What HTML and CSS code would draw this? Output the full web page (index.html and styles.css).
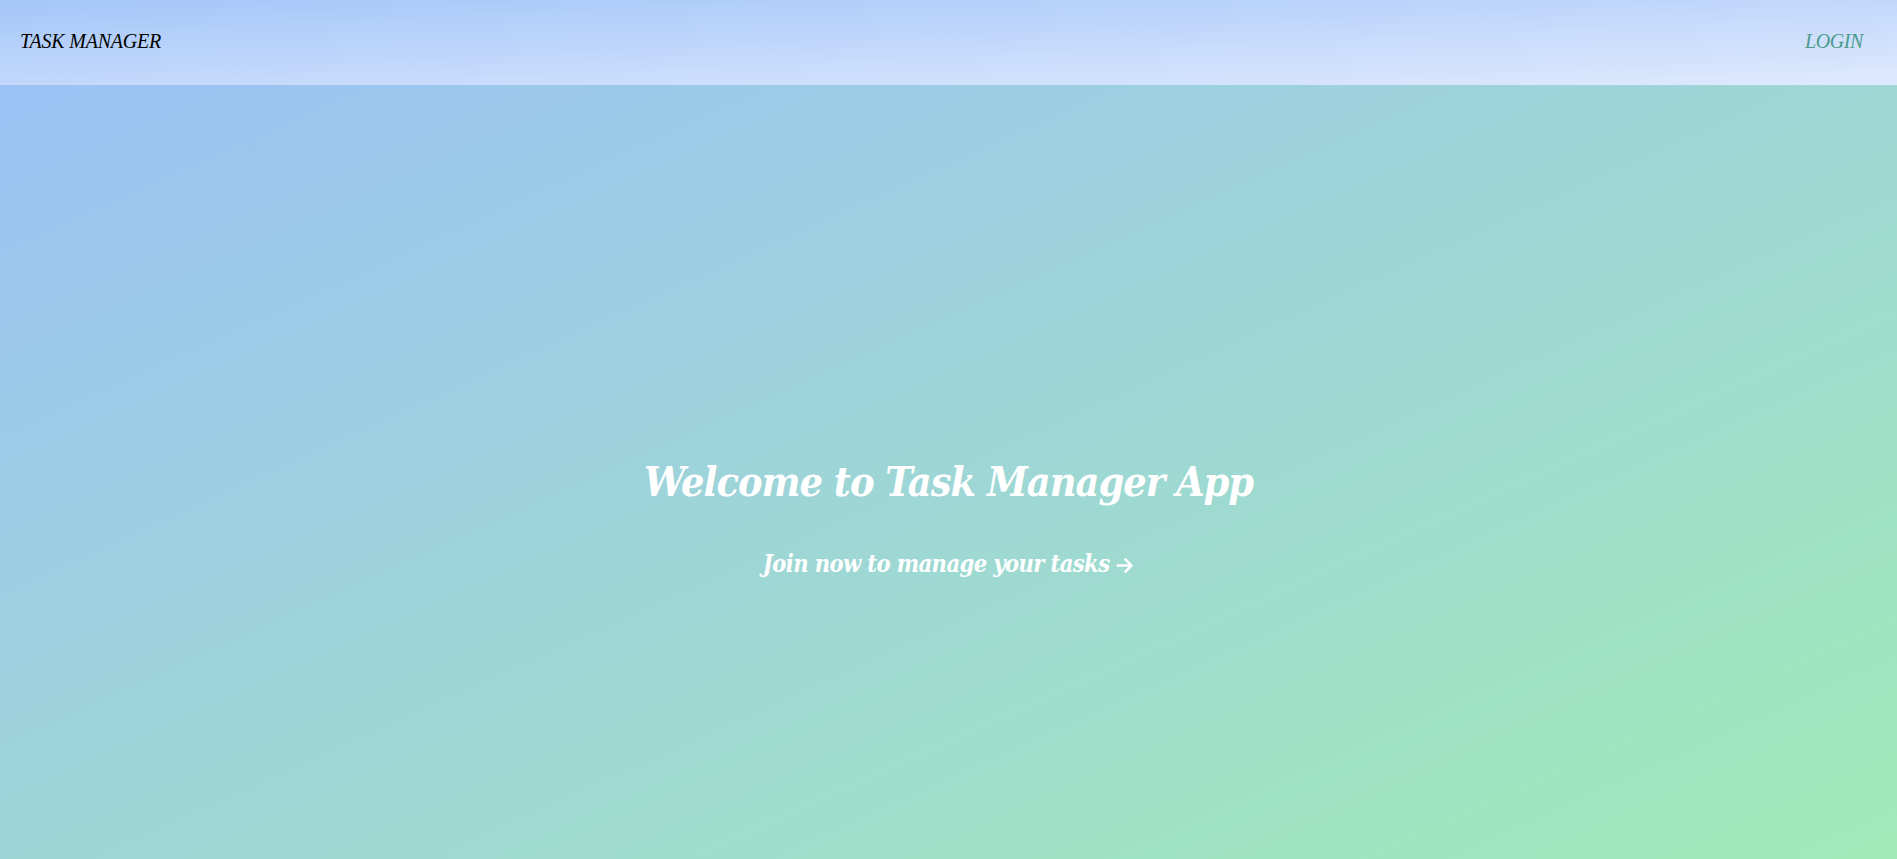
FILE: index.html
```html
<!DOCTYPE html>
<html lang="en">
<head>
<meta charset="utf-8">
<title>Task Manager</title>
<link rel="stylesheet" href="styles.css">
</head>
<body>
  <header class="topbar">
    <a class="brand" href="#">TASK MANAGER</a>
    <a class="login" href="#">LOGIN</a>
  </header>
  <main class="hero">
    <h1 class="hero-title">Welcome to Task Manager App</h1>
    <a class="hero-cta" href="#">Join now to manage your tasks <svg class="arrow" viewBox="0 0 16 16" width="18" height="18" aria-hidden="true"><path d="M1.5 8.5H13.5M8.3 3L13.8 8.5L8.3 14" fill="none" stroke="#fff" stroke-width="2.2" stroke-linecap="round" stroke-linejoin="round"/></svg></a>
  </main>
</body>
</html>
```

FILE: styles.css
```css
html {
  min-height: 100%;
  background: linear-gradient(to bottom right, #9ac0f8, #a1eab7) fixed;
}
body {
  margin: 0;
  font-family: "Liberation Serif", serif;
}
.topbar {
  height: 85px;
  display: flex;
  align-items: center;
  justify-content: space-between;
  padding: 0 34px 0 20px;
  box-sizing: border-box;
  background: linear-gradient(to bottom right, #a5c6f9, #dfeafd);
}
.brand, .login {
  font-family: "Liberation Serif", serif;
  font-style: italic;
  font-size: 20px;
  text-decoration: none;
  margin-top: -3px;
}
.brand { color: #000; letter-spacing: -0.2px; }
.login { color: #4b9a8c; letter-spacing: -0.4px; }
.hero {
  min-height: 100vh;
  padding-top: 6px;
  box-sizing: border-box;
  display: flex;
  flex-direction: column;
  align-items: center;
  justify-content: center;
  color: #fff;
  font-family: "DejaVu Serif Condensed", "DejaVu Serif", serif;
  font-stretch: condensed;
  font-style: italic;
  font-weight: bold;
}
.hero-title {
  margin: 0 0 44px;
  font-size: 41px;
  font-weight: bold;
  letter-spacing: -1px;
}
.hero-cta {
  color: #fff;
  text-decoration: none;
  font-size: 23.5px;
  letter-spacing: -0.6px;
}
.arrow {
  display: inline-block;
  vertical-align: -2px;
}
```
